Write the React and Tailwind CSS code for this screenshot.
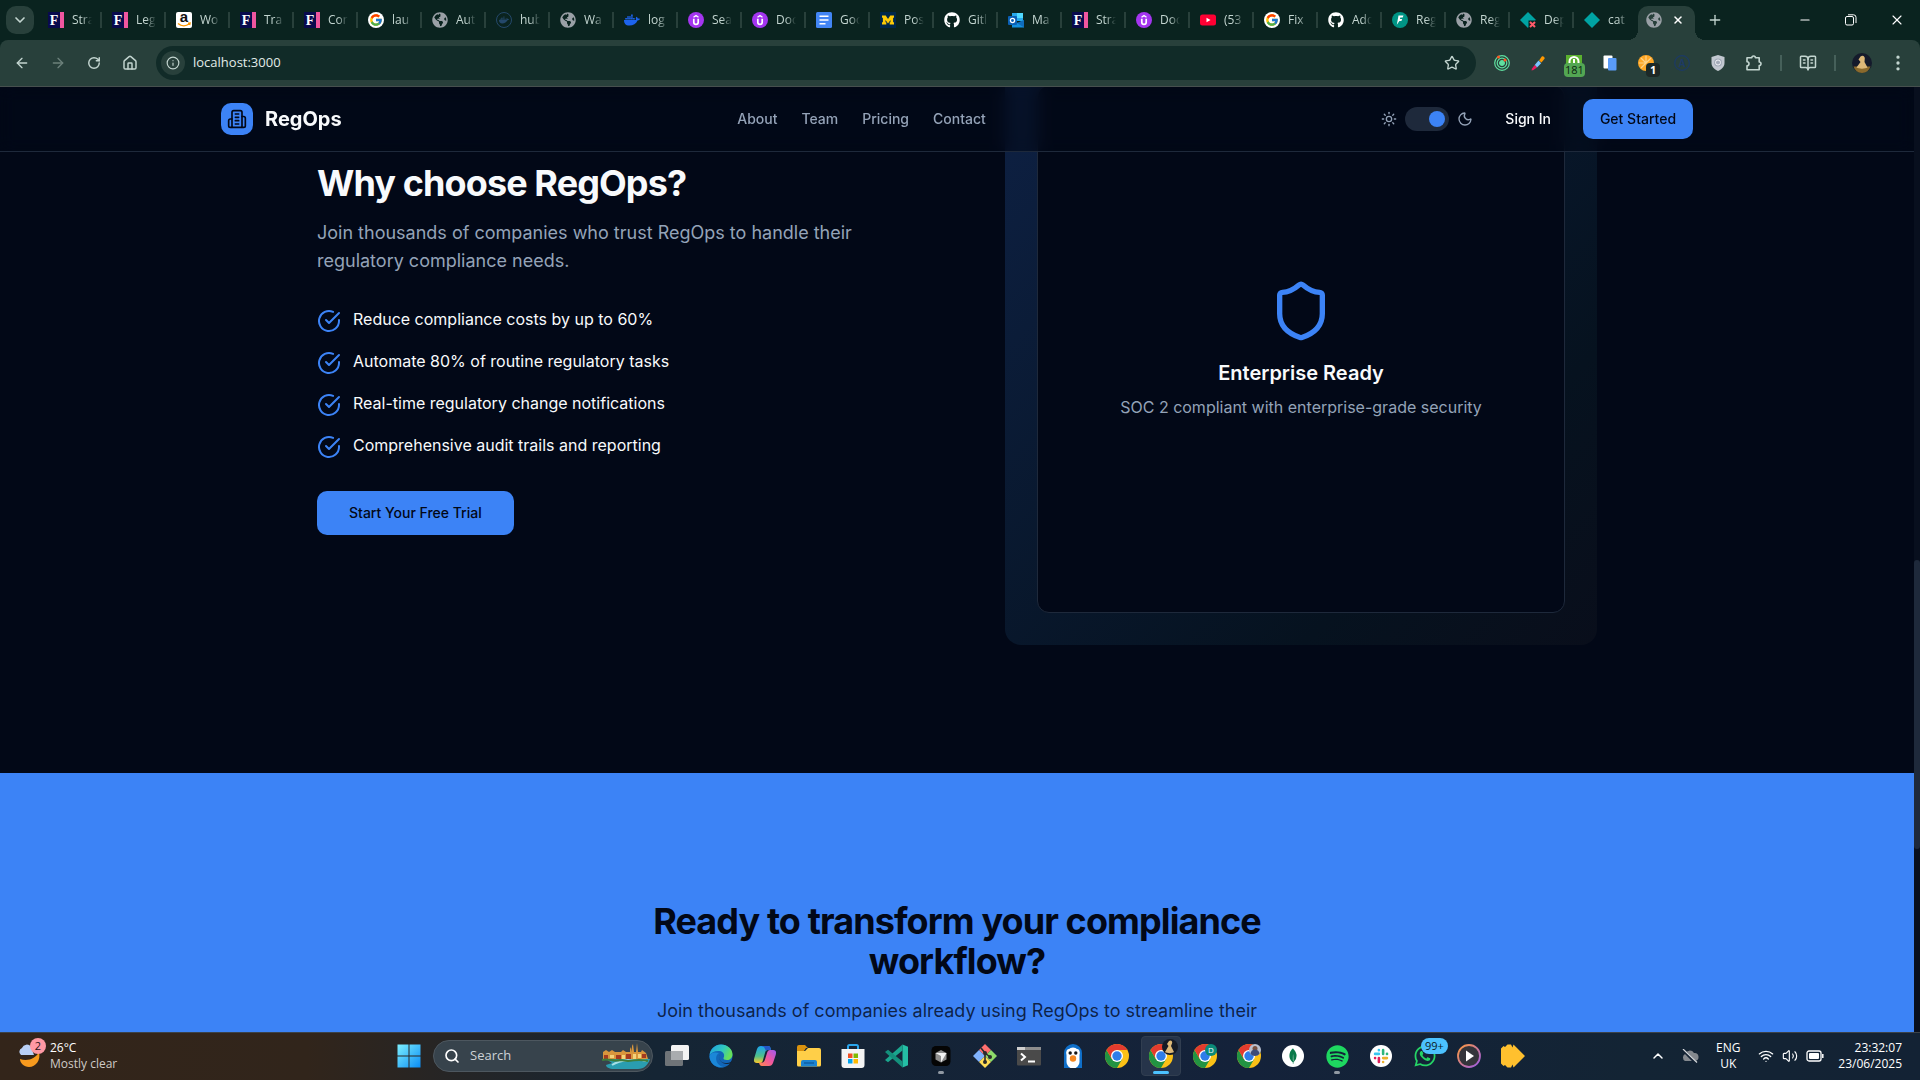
import React, { useState } from 'react';
import { FaGithub, FaDocker, FaGlobeAmericas, FaWhatsapp, FaSpotify } from 'react-icons/fa';
import { FcGoogle } from 'react-icons/fc';
import { SiMongodb } from 'react-icons/si';
import { ArrowLeft, ArrowRight, RotateCw, House, Info, Star, BookOpenText, ChevronDown, ChevronUp, X, Plus, Minus, Sun, Moon, Shield, Search, Wifi, Volume2, EllipsisVertical } from 'lucide-react';

// ---------- favicons ----------

const Globe = () => <FaGlobeAmericas className="size-4 text-[#9aa0a6]" />;

const FBadge = () => (
  <svg viewBox="0 0 16 16" className="size-4">
    <rect width="12" height="16" fill="#090a4d" />
    <rect x="12" width="4" height="16" fill="#f0569f" />
    <text x="6" y="13" textAnchor="middle" fontFamily="Liberation Serif, serif" fontWeight="700" fontSize="14" fill="#fff">F</text>
  </svg>
);

const Amazon = () => (
  <svg viewBox="0 0 16 16" className="size-4">
    <rect width="16" height="16" rx="2" fill="#fff" />
    <text x="8" y="10" textAnchor="middle" fontFamily="Liberation Sans, sans-serif" fontWeight="700" fontSize="15" fill="#111">a</text>
    <path d="M2 11.500c3.500 2.800 8 2.800 11 .5M12 11.200l2-.2-.4 2" stroke="#f90" strokeWidth="1.500" fill="none" />
  </svg>
);

const Google = () => (
  <span className="grid size-4 place-items-center rounded-full bg-white">
    <FcGoogle className="size-3.5" />
  </span>
);

const Hub = () => (
  <span className="grid size-4 place-items-center rounded-full border border-[#24486a] text-[#24486a]">
    <FaDocker className="size-2.5" />
  </span>
);

const Docker = () => <FaDocker className="size-4 text-[#1d63ed]" />;

const Udemy = () => (
  <svg viewBox="0 0 16 16" className="size-4">
    <circle cx="8" cy="8" r="8" fill="#a435f0" />
    <path d="M5.500 5.200 8 3.600l2.500 1.600" stroke="#fff" strokeWidth="1.300" fill="none" />
    <path d="M5.800 6.800v3.400a2.200 2.200 0 0 0 4.400 0V6.800" stroke="#fff" strokeWidth="1.700" fill="none" />
  </svg>
);

const Docs = () => (
  <svg viewBox="0 0 16 16" className="size-4">
    <rect width="16" height="16" rx="1.500" fill="#4285f4" />
    <path d="M3.500 4.200h9M3.500 8h9M3.500 11.800h6" stroke="#fff" strokeWidth="1.600" />
  </svg>
);

const Michigan = () => (
  <svg viewBox="0 0 16 16" className="size-4">
    <rect width="16" height="16" fill="#00274c" />
    <path d="M2 3.500h3.700L8 7l2.300-3.500H14v2.300h-.9v4.400h.9v2.300H9.700v-2.300h.8V8L8 11.500 5.500 8v2.200h.8v2.300H2v-2.300h.9V5.800H2Z" fill="#ffcb05" />
  </svg>
);

const Github = () => <FaGithub className="size-4 text-white" />;

const Outlook = () => (
  <svg viewBox="0 0 16 16" className="size-4">
    <path d="M4 1h11v8H4z" fill="#28a8ea" />
    <path d="M9 1h6v5H9z" fill="#50d9ff" />
    <path d="M4 8l6 3 6-3v7.500H4Z" fill="#1490df" />
    <path d="M16 8v7.500L9 11Z" fill="#0f6cbd" />
    <rect y="4" width="9" height="9" rx="1" fill="#0a5fb4" />
    <circle cx="4.500" cy="8.500" r="2.100" stroke="#fff" strokeWidth="1.300" fill="none" />
  </svg>
);

const Youtube = () => (
  <svg viewBox="0 0 16 16" className="size-4">
    <rect y="2.500" width="16" height="11" rx="2.500" fill="#ff0033" />
    <path d="M6.500 5.700v4.600l4-2.300Z" fill="#fff" />
  </svg>
);

const FastApi = () => (
  <svg viewBox="0 0 16 16" className="size-4">
    <circle cx="8" cy="8" r="8" fill="#009485" />
    <path d="M6.500 3.500h5l-.8 2H8.300l-.4 1.500h2.300l-.8 1.900H7.400L4.800 12.800Z" fill="#fff" />
  </svg>
);

const Diamond = ({ failed }) => (
  <svg viewBox="0 0 16 16" className="size-4">
    <path d="M8 0l8 8-8 8-8-8Z" fill="#00a3a3" />
    {failed && (
      <>
        <path d="M8.500 8.500H16V16H8.500Z" fill="#0a231f" />
        <path d="M10 10l5 5M15 10l-5 5" stroke="#ff5a6a" strokeWidth="2" />
      </>
    )}
  </svg>
);

const tabs = [
  { icon: <FBadge />, title: 'Stra' },
  { icon: <FBadge />, title: 'Leg' },
  { icon: <Amazon />, title: 'Wo' },
  { icon: <FBadge />, title: 'Tra' },
  { icon: <FBadge />, title: 'Cor' },
  { icon: <Google />, title: 'lau' },
  { icon: <Globe />, title: 'Aut' },
  { icon: <Hub />, title: 'hub' },
  { icon: <Globe />, title: 'Wa' },
  { icon: <Docker />, title: 'log' },
  { icon: <Udemy />, title: 'Sea' },
  { icon: <Udemy />, title: 'Doc' },
  { icon: <Docs />, title: 'Goo' },
  { icon: <Michigan />, title: 'Pos' },
  { icon: <Github />, title: 'Gitl' },
  { icon: <Outlook />, title: 'Ma' },
  { icon: <FBadge />, title: 'Stra' },
  { icon: <Udemy />, title: 'Doc' },
  { icon: <Youtube />, title: '(53' },
  { icon: <Google />, title: 'Fix' },
  { icon: <Github />, title: 'Add' },
  { icon: <FastApi />, title: 'Reg' },
  { icon: <Globe />, title: 'Reg' },
  { icon: <Diamond failed />, title: 'Dep' },
  { icon: <Diamond />, title: 'cat' },
];

const TabStrip = () => (
  <div className="flex h-10 items-center bg-[#0a231f] pl-1.5 text-[#c3d5d0]">
    <button aria-label="Search tabs" className="mr-1 grid size-7 shrink-0 place-items-center rounded-[10px] bg-[#28403b]">
      <ChevronDown className="size-4" strokeWidth={2.5} />
    </button>
    {tabs.map((tab, i) => (
      <button key={i} className="flex h-8 w-16 shrink-0 items-center gap-2 pl-2.5 text-xs">
        {tab.icon}
        <span className="w-5 overflow-hidden text-left whitespace-nowrap [mask-image:linear-gradient(to_right,black_50%,transparent)]">{tab.title}</span>
        {i < tabs.length - 1 && <span className="ml-auto h-4 w-0.5 bg-[#28403b]" />}
      </button>
    ))}
    <div className="relative flex h-[34px] w-[57px] shrink-0 items-center gap-2 self-end rounded-t-[10px] bg-[#28403b] pb-1.5 pl-2 before:absolute before:bottom-0 before:-left-2.5 before:size-2.5 before:bg-[radial-gradient(circle_at_0_0,transparent_10px,#28403b_10px)] after:absolute after:-right-2.5 after:bottom-0 after:size-2.5 after:bg-[radial-gradient(circle_at_100%_0,transparent_10px,#28403b_10px)]">
      <Globe />
      <button aria-label="Close tab" className="grid size-4 place-items-center text-white">
        <X className="size-3" strokeWidth={3} />
      </button>
    </div>
    <button aria-label="New tab" className="ml-3 grid size-4 place-items-center">
      <Plus className="size-4" />
    </button>
    <div className="ml-auto flex text-white">
      <button aria-label="Minimize" className="grid h-10 w-[46px] place-items-center">
        <Minus className="size-3.5" strokeWidth={2} />
      </button>
      <button aria-label="Restore" className="grid h-10 w-[46px] place-items-center">
        <svg viewBox="0 0 12 12" className="size-3" fill="none" stroke="currentColor">
          <rect x=".5" y="2.500" width="8" height="8.500" rx="1.500" />
          <path d="M3 .8h5.500a2.500 2.500 0 0 1 2.500 2.500V9" />
        </svg>
      </button>
      <button aria-label="Close" className="grid h-10 w-[46px] place-items-center">
        <X className="size-4" strokeWidth={1.7} />
      </button>
    </div>
  </div>
);

const Knight = ({ className }) => (
  <svg viewBox="0 0 20 20" className={className}>
    <circle cx="10" cy="10" r="10" fill="#141a2b" />
    <path d="M1.500 13.500h17A9.500 9.500 0 0 1 10 20a9.500 9.500 0 0 1-8.500-6.500Z" fill="#8a6a2c" />
    <path d="M8.500 3.500c2.500-2 5 .3 4.200 3L12.500 9l3 5.500c-2.500 1.500-8.500 1.500-11 0L8.500 9 6.500 6.500Z" fill="#dcb878" />
  </svg>
);

const extensions = [
  <svg key="orbit" viewBox="0 0 16 16" className="size-4" fill="none" stroke="#5fe0a0">
    <circle cx="8" cy="8" r="7.300" strokeWidth="1.200" />
    <circle cx="8" cy="8" r="4.800" strokeWidth="1.200" />
    <circle cx="8" cy="8" r="2.500" fill="#5fe0a0" />
    <circle cx="4.500" cy="2" r="1.500" fill="#ff5722" stroke="none" />
    <circle cx="11" cy="5" r="1.500" fill="#ff5722" stroke="none" />
  </svg>,
  <svg key="picker" viewBox="0 0 16 16" className="size-4">
    <path d="M9 5.500l2.800-3.900c1-1.200 3.700.9 2.700 2.200L11.500 7.500Z" fill="#ff9800" />
    <path d="M8.500 5.500l2.700 2.700L7 12.500 4.700 10Z" fill="#7cc4ff" />
    <path d="M4.700 10l2.300 2.500L3.500 15l-2 .5.500-2Z" fill="#e91e63" />
  </svg>,
  <span key="ad" className="relative block size-4">
    <svg viewBox="0 0 16 16" className="size-4">
      <rect width="16" height="16" fill="#5bb12f" />
      <path d="M3.500 9V6.500a4.500 4.500 0 0 1 9 0V9M8 4v6" stroke="#fff" strokeWidth="2" fill="none" />
    </svg>
    <span className="absolute top-2 -left-0.5 rounded-sm bg-[#53a653] px-px text-[11px] leading-[14px] text-[#0c2410]">181</span>
  </span>,
  <svg key="pages" viewBox="0 0 16 16" className="size-4">
    <rect x="1.500" y=".5" width="9" height="13" rx="1" fill="#fff" />
    <rect x="6" y="3" width="8.500" height="12.500" rx="1" fill="#5a9cf8" />
  </svg>,
  <span key="cookie" className="relative block size-4">
    <svg viewBox="0 0 16 16" className="size-4">
      <circle cx="8" cy="8" r="8" fill="#ffa726" />
      <path d="M8 8L3 3M8 8V1M8 8l5-5M8 8H1M8 8l-5 5" stroke="#ffd38a" strokeWidth="1.200" />
    </svg>
    <span className="absolute top-2 left-2 rounded-sm bg-[#1d2826] px-1 text-[11px] leading-[14px] font-bold text-white">1</span>
  </span>,
  <svg key="letter" viewBox="0 0 16 16" className="size-4">
    <circle cx="8" cy="8" r="7.300" fill="none" stroke="#1c3a66" strokeWidth="1.200" />
    <text x="8" y="11.500" textAnchor="middle" fontFamily="Liberation Sans, sans-serif" fontWeight="700" fontSize="10" fill="#1c3a66">A</text>
  </svg>,
  <svg key="guard" viewBox="0 0 16 16" className="size-4">
    <path d="M8 0l6.500 2v6c0 4-3.500 6.700-6.500 8-3-1.300-6.500-4-6.500-8V2Z" fill="#c2c8d0" />
    <circle cx="8" cy="7.500" r="4" fill="#a3abb8" />
    <circle cx="8" cy="7.500" r="2.500" fill="none" stroke="#eef0f4" />
  </svg>,
  <svg key="puzzle" viewBox="0 0 16 16" className="size-4 text-[#c3d5d0]" fill="none" stroke="currentColor" strokeWidth="1.600">
    <path d="M1 2.800h4.800a1.800 1.800 0 0 1 3.600 0h3.800v4.200a1.800 1.800 0 0 1 0 3.600v4.200H1v-4a2 2 0 0 0 0-4Z" strokeLinejoin="round" />
  </svg>,
];

const Toolbar = () => (
  <div className="bg-[#0a231f]">
    <div className="flex h-[47px] items-center rounded-t-lg border-b border-[#46504e] bg-[#28403b] pl-1 text-[#c3d5d0]">
      <button aria-label="Back" className="grid size-9 place-items-center"><ArrowLeft className="size-4" /></button>
      <button aria-label="Forward" className="grid size-9 place-items-center text-[#6c817b]"><ArrowRight className="size-4" /></button>
      <button aria-label="Reload" className="grid size-9 place-items-center"><RotateCw className="size-3.5" strokeWidth={2.5} /></button>
      <button aria-label="Home" className="grid size-9 place-items-center"><House className="size-4" strokeWidth={2.2} /></button>
      <div className="mr-2 ml-2 flex h-[34px] flex-1 items-center gap-2 rounded-full bg-[#112b28] pr-4 pl-[5px]">
        <button aria-label="Site information" className="grid size-6 place-items-center rounded-full bg-[#28403b]">
          <Info className="size-3.5" />
        </button>
        <input aria-label="Address" defaultValue="localhost:3000" className="min-w-0 flex-1 bg-transparent text-[13px] text-[#e2ebe8] outline-none" />
        <button aria-label="Bookmark this page"><Star className="size-4" /></button>
      </div>
      {extensions.map((icon, i) => (
        <button key={i} aria-label={`Extension ${i + 1}`} className="grid size-9 place-items-center">{icon}</button>
      ))}
      <span className="mx-2 h-4 w-0.5 bg-[#46605a]" />
      <button aria-label="Reading list" className="grid size-9 place-items-center"><BookOpenText className="size-[18px]" /></button>
      <span className="mx-2 h-4 w-0.5 bg-[#46605a]" />
      <button aria-label="Profile" className="grid size-9 place-items-center"><Knight className="size-5" /></button>
      <button aria-label="Menu" className="mr-1 grid size-9 place-items-center"><EllipsisVertical className="size-5" /></button>
    </div>
  </div>
);

// ---------- landing page ----------

const BuildingIcon = () => (
  <svg viewBox="0 0 24 24" className="size-5 text-[#020817]" fill="none" stroke="currentColor" strokeWidth="2" strokeLinecap="round" strokeLinejoin="round">
    <path d="M6 22V4a2 2 0 0 1 2-2h8a2 2 0 0 1 2 2v18Z" />
    <path d="M6 12H4a2 2 0 0 0-2 2v6a2 2 0 0 0 2 2h2" />
    <path d="M18 9h2a2 2 0 0 1 2 2v9a2 2 0 0 1-2 2h-2" />
    <path d="M10 6h4M10 10h4M10 14h4M10 18h4" />
  </svg>
);

const CheckIcon = () => (
  <svg viewBox="0 0 24 24" className="mt-0.5 size-6 shrink-0 text-[#3c83f6]" fill="none" stroke="currentColor" strokeWidth="2" strokeLinecap="round" strokeLinejoin="round">
    <path d="M22 11.080V12a10 10 0 1 1-5.930-9.140" />
    <path d="m9 11 3 3L22 4" />
  </svg>
);

const SiteHeader = () => {
  const [dark, setDark] = useState(true);

  return (
    <header className="absolute inset-x-0 top-0 z-10 border-b border-[#1e293b] bg-[#020817]/60 backdrop-blur-sm">
      <div className="mx-auto flex h-16 max-w-screen-2xl items-center justify-between px-8">
        <a href="#" className="flex items-center gap-3">
          <span className="grid size-8 place-items-center rounded-[10px] bg-[#3c83f6]"><BuildingIcon /></span>
          <span className="text-xl font-bold">RegOps</span>
        </a>
        <nav className="flex gap-6 text-sm font-medium text-[#94a3b8]">
          <a href="#about">About</a>
          <a href="#team">Team</a>
          <a href="#pricing">Pricing</a>
          <a href="#contact">Contact</a>
        </nav>
        <div className="flex items-center gap-4">
          <label className="flex items-center gap-2 text-[#94a3b8]">
            <Sun className="size-4" />
            <input
              type="checkbox"
              role="switch"
              aria-label="Dark mode"
              checked={dark}
              onChange={() => setDark(!dark)}
              className="flex h-6 w-11 appearance-none rounded-full bg-[#1e293b] p-1 before:size-4 before:rounded-full before:bg-[#3c83f6] checked:justify-end"
            />
            <Moon className="size-4" />
          </label>
          <button className="h-10 px-4 text-sm font-medium">Sign In</button>
          <button className="h-10 w-[110px] rounded-[10px] bg-[#3c83f6] text-sm font-medium text-[#020817]">Get Started</button>
        </div>
      </div>
    </header>
  );
};

const benefits = [
  'Reduce compliance costs by up to 60%',
  'Automate 80% of routine regulatory tasks',
  'Real-time regulatory change notifications',
  'Comprehensive audit trails and reporting',
];

const WhySection = () => (
  <section className="-mt-[162px] py-32">
    <div className="mx-auto grid max-w-7xl grid-cols-2 items-center gap-24">
      <div>
        <h2 className="text-4xl font-bold tracking-tight">Why choose RegOps?</h2>
        <p className="mt-4 text-lg leading-7 text-[#94a3b8]">
          Join thousands of companies who trust RegOps to handle their regulatory compliance needs.
        </p>
        <ul className="mt-8 space-y-4">
          {benefits.map(text => (
            <li key={text} className="flex items-start gap-3">
              <CheckIcon />
              <span>{text}</span>
            </li>
          ))}
        </ul>
        <button className="mt-8 h-11 rounded-[10px] bg-[#3c83f6] px-8 text-sm font-medium text-[#020817]">Start Your Free Trial</button>
      </div>
      <div className="aspect-square rounded-2xl bg-linear-to-br from-[#0e2145] via-[#06121f] via-75% to-[#090e1b] p-8">
        <div className="flex h-full flex-col items-center justify-center rounded-xl border border-[#1e293b] bg-[#020817]">
          <Shield className="mb-4 size-16 text-[#3c83f6]" />
          <h3 className="mb-2 text-xl font-semibold">Enterprise Ready</h3>
          <p className="text-[#94a3b8]">SOC 2 compliant with enterprise-grade security</p>
        </div>
      </div>
    </div>
  </section>
);

const CallToAction = () => (
  <section className="bg-[#3c83f6] py-32 text-center text-[#020817]">
    <div className="mx-auto max-w-2xl">
      <h2 className="text-4xl font-bold tracking-tight">Ready to transform your compliance workflow?</h2>
      <p className="mt-4 text-lg leading-7 text-[#020817]/80">Join thousands of companies already using RegOps to streamline their</p>
    </div>
  </section>
);

// ---------- taskbar ----------

const StartIcon = () => (
  <svg viewBox="0 0 24 24" className="size-6">
    <defs>
      <linearGradient id="win" x1="0" y1="0" x2="1" y2="1">
        <stop offset="0" stopColor="#7df0ff" />
        <stop offset="1" stopColor="#0a8cf5" />
      </linearGradient>
    </defs>
    <path d="M.5.5h11v11H.5zM12.500.5h11v11h-11zM.5 12.500h11v11H.5zM12.500 12.500h11v11h-11z" fill="url(#win)" />
  </svg>
);

const TaskView = () => (
  <svg viewBox="0 0 24 24" className="size-6">
    <rect x="6" y="1" width="18" height="15" rx="1.500" fill="#f3f3f3" />
    <rect y="7" width="18" height="15" rx="1.500" fill="#6f7478" />
    <path d="M6 7h12v9H6z" fill="#a9acaf" />
  </svg>
);

const EdgeIcon = () => (
  <svg viewBox="0 0 24 24" className="size-6">
    <defs>
      <linearGradient id="edge1" x1="0" y1="0" x2="1" y2=".4">
        <stop offset="0" stopColor="#1f9de0" />
        <stop offset=".6" stopColor="#2fc8c0" />
        <stop offset="1" stopColor="#66e05a" />
      </linearGradient>
    </defs>
    <circle cx="12" cy="12" r="11.500" fill="#1266b8" />
    <path d="M.6 11C1.400 4.800 6.200.5 12 .5 18.500.5 23.500 5 23.500 10.500c0 3.500-2.600 5.500-5.500 5.500-2.500 0-4-1-3.500-2 1.500-2.500.5-6.500-4-7C6 6.500 2 8.500.6 11Z" fill="url(#edge1)" />
    <path d="M10 9c-5 3-3.500 12 4.500 14C9 24.500.8 20.500.5 12.500.5 9 6 7.500 10 9Z" fill="#1b87d8" />
    <path d="M11 10.500c-2 3.500.5 8.500 5.500 8.500 2.500 0 4.500-.7 5.800-1.600.4-.2.700.2.500.5l-1 1.400c-7 3-13.800-3.300-10.800-8.800Z" fill="#152436" />
  </svg>
);

const CopilotIcon = () => (
  <svg viewBox="0 0 24 24" className="size-6">
    <defs>
      <linearGradient id="cop1" x1="0" y1="0" x2="0" y2="1">
        <stop offset="0" stopColor="#1aa3f0" />
        <stop offset=".6" stopColor="#4fc08a" />
        <stop offset="1" stopColor="#ffc928" />
      </linearGradient>
      <linearGradient id="cop2" x1="1" y1="0" x2="0" y2="1">
        <stop offset="0" stopColor="#a05af0" />
        <stop offset=".5" stopColor="#f0569f" />
        <stop offset="1" stopColor="#ff8a4c" />
      </linearGradient>
    </defs>
    <path d="M8 2h7c2 0 2.500 1.500 3 4h-3c-2 0-2.500 1-3 3l-2 7c-.5 2-1 3-3 3H4c-3 0-3.500-2-2.700-5L4 5c.8-2 2-3 4-3Z" fill="url(#cop1)" />
    <path d="M16 22H9c-2 0-2.500-1.500-3-3.500h3c2 0 2.500-1.500 3-3l2-6.500c.6-2 1.500-3 3-3h3c3 0 3.500 2 2.700 5L20 19c-.8 2-2 3-4 3Z" fill="url(#cop2)" />
    <path d="M8 2h7c2 0 2.500 1.500 3 4h-3c-1 0-1.500.3-2 1L11 3Z" fill="#2458c8" />
  </svg>
);

const FolderIcon = () => (
  <svg viewBox="0 0 24 24" className="size-6">
    <path d="M0 3a2 2 0 0 1 2-2h6l3 3h-2L7 7H0Z" fill="#d9920e" />
    <path d="M0 7h8l3-3h11a2 2 0 0 1 2 2v15a1.500 1.500 0 0 1-1.500 1.500h-21A1.500 1.500 0 0 1 0 21Z" fill="#ffcf48" />
    <path d="M4 22.500V18a2 2 0 0 1 2-2h12a2 2 0 0 1 2 2v4.500Z" fill="#1c83d0" />
    <path d="M7 19h10" stroke="#0e5ea3" strokeWidth="1.500" />
  </svg>
);

const StoreIcon = () => (
  <svg viewBox="0 0 24 24" className="size-6">
    <path d="M7 6V2.500A1.500 1.500 0 0 1 8.500 1h7A1.500 1.500 0 0 1 17 2.500V6" stroke="#2aa5ec" strokeWidth="2" fill="none" />
    <path d="M.5 5h23v16a3 3 0 0 1-3 3h-17a3 3 0 0 1-3-3Z" fill="#f4f4f4" />
    <path d="M7 9.500h4.500V14H7z" fill="#f25022" />
    <path d="M12.500 9.500H17V14h-4.500z" fill="#7fba00" />
    <path d="M7 15h4.500v4.500H7z" fill="#00a4ef" />
    <path d="M12.500 15H17v4.500h-4.500z" fill="#ffb900" />
  </svg>
);

const CodeIcon = () => (
  <svg viewBox="0 0 24 24" className="size-6">
    <path d="M17.500.5 23 2.800v18.400l-5.500 2.300Z" fill="#24bfa5" />
    <path d="M17.500.5v6L3 18.200 0 16Z" fill="#1aa68e" />
    <path d="M17.500 23.500v-6L3 5.800 0 8Z" fill="#14907c" />
  </svg>
);

const CubeIcon = () => (
  <svg viewBox="0 0 24 24" className="size-6">
    <rect x="2.500" y="2" width="19" height="20" rx="4.500" fill="#050505" />
    <path d="M12 6l5.500 3v6.500L12 18.500 6.500 15.500V9Z" fill="#8d8d8d" />
    <path d="M6.500 9h11L12 18.500V12Z" fill="#f1f1f1" />
  </svg>
);

const GitIcon = () => (
  <svg viewBox="0 0 24 24" className="size-6">
    <path d="M12 0l6 6-6 6-6-6Z" fill="#ff6f6f" />
    <path d="M6 6l6 6-6 6-6-6Z" fill="#80b3ff" />
    <path d="M18 6l6 6-6 6-6-6Z" fill="#8ddb6a" />
    <path d="M12 12l6 6-6 6-6-6Z" fill="#ffdd55" />
    <path d="M8 4l4 5v9M12 9l5 4" stroke="#2b2b2b" strokeWidth="1.600" fill="none" />
    <circle cx="12" cy="9" r="2" fill="#2b2b2b" />
    <circle cx="12" cy="18" r="2" fill="#2b2b2b" />
    <circle cx="17" cy="13" r="2" fill="#2b2b2b" />
  </svg>
);

const TerminalIcon = () => (
  <svg viewBox="0 0 24 24" className="size-6">
    <rect y="3" width="24" height="18.500" rx="1" fill="#4a4a4a" />
    <path d="M0 3h24v3H0z" fill="#8d8d8d" />
    <path d="M0 3h8v3H0z" fill="#cfcfcf" />
    <path d="M4 9.500l4 3.500-4 3.500M11 17.500h7" stroke="#fff" strokeWidth="2" fill="none" />
  </svg>
);

const PenguinIcon = () => (
  <svg viewBox="0 0 24 24" className="size-6">
    <path d="M3 24V9a9 9 0 0 1 18 0v15Z" fill="#0f6fc9" />
    <path d="M5.500 10a6.500 6.500 0 0 1 13 0v8a6.500 6.500 0 0 1-13 0Z" fill="#fff" />
    <circle cx="8.700" cy="8.500" r="3.400" fill="#fff" />
    <circle cx="15.300" cy="8.500" r="3.400" fill="#fff" />
    <circle cx="9.200" cy="9" r="1.700" fill="#171717" />
    <circle cx="14.800" cy="9" r="1.700" fill="#171717" />
    <circle cx="12" cy="14.500" r="3.200" fill="#f5871f" />
  </svg>
);

const ChromeIcon = ({ children }) => (
  <svg viewBox="0 0 24 24" className="size-6 overflow-visible">
    <circle cx="12" cy="12" r="12" fill="#fbc116" />
    <path d="M1.600 6A12 12 0 0 0 12 24l5.200-9H6.800Z" fill="#229342" />
    <path d="M1.600 6A12 12 0 0 1 22.400 6H12L6.800 15Z" fill="#e33b2e" />
    <circle cx="12" cy="12" r="6" fill="#fff" />
    <circle cx="12" cy="12" r="4.700" fill="#2f7de9" />
    {children}
  </svg>
);

const ChromeKnight = () => (
  <ChromeIcon>
    <circle cx="21" cy="3" r="8" fill="#141a26" />
    <path d="M20-3c2-1.500 4 .5 3 2.500L22 2l3 6c-2 1.500-7 1.500-9 0l3.500-6-1.500-2Z" fill="#dcb878" />
  </ChromeIcon>
);

const ChromeLetter = () => (
  <ChromeIcon>
    <circle cx="18" cy="6" r="6" fill="#0b8a78" />
    <text x="18" y="9" textAnchor="middle" fontSize="8" fontFamily="Open Sans, sans-serif" fill="#fff">D</text>
  </ChromeIcon>
);

const ChromePhoto = () => (
  <ChromeIcon>
    <circle cx="18" cy="6" r="6" fill="#b9c0cf" />
    <circle cx="18" cy="4.500" r="2.500" fill="#7a5140" />
    <path d="M13.500 10a4.500 4.500 0 0 1 9 0 6 6 0 0 1-9 0Z" fill="#3d4b78" />
  </ChromeIcon>
);

const MongoIcon = () => (
  <span className="grid size-[22px] place-items-center rounded-full bg-white">
    <SiMongodb className="size-4 text-[#0a7a4a]" />
  </span>
);

const SlackIcon = () => (
  <svg viewBox="0 0 24 24" className="size-[22px]">
    <circle cx="12" cy="12" r="12" fill="#fff" />
    <g strokeWidth="2.800" strokeLinecap="round">
      <path d="M5.500 9.700h4.200M9.700 5.500v.2" stroke="#36c5f0" />
      <path d="M14.300 5.500v4.200M18.500 9.700h.1" stroke="#2eb67d" />
      <path d="M14.300 14.300h4.200M14.300 18.500v.1" stroke="#ecb22e" />
      <path d="M9.700 14.300v4.200M5.500 14.300h.1" stroke="#e01e5a" />
    </g>
  </svg>
);

const WhatsappIcon = () => (
  <span className="relative">
    <FaWhatsapp className="size-6 text-[#25d366]" />
    <span className="absolute -top-1.5 left-2 rounded-lg bg-[#4cc2ff] px-1 text-[11px] leading-4 text-[#0b1a26]">99+</span>
  </span>
);

const MediaIcon = () => (
  <svg viewBox="0 0 24 24" className="size-6">
    <defs>
      <linearGradient id="media" x1="0" y1="0" x2="1" y2="1">
        <stop offset="0" stopColor="#ff9a3c" />
        <stop offset="1" stopColor="#9a5ae8" />
      </linearGradient>
    </defs>
    <circle cx="12" cy="12" r="11" fill="#34343a" stroke="url(#media)" strokeWidth="1.800" />
    <path d="M9 6.500v11l8-5.500Z" fill="#fff" />
  </svg>
);

const ArrowsIcon = () => (
  <svg viewBox="0 0 24 24" className="size-6">
    <path d="M0 4.500 2.500 2 4 3l2.500-2.500H10l1.500 3L12.500.5 24 12 12.500 23.500l-1-3-1.500 3H6.500L4 21l-1.500 1L0 19.500Z" fill="#ffc02e" />
  </svg>
);

const apps = [
  { name: 'Task view', icon: <TaskView /> },
  { name: 'Edge', icon: <EdgeIcon /> },
  { name: 'Copilot', icon: <CopilotIcon /> },
  { name: 'File Explorer', icon: <FolderIcon /> },
  { name: 'Store', icon: <StoreIcon /> },
  { name: 'Code', icon: <CodeIcon /> },
  { name: 'Cursor', icon: <CubeIcon />, running: true },
  { name: 'Git', icon: <GitIcon /> },
  { name: 'Terminal', icon: <TerminalIcon /> },
  { name: 'Penguin', icon: <PenguinIcon /> },
  { name: 'Chrome', icon: <ChromeIcon /> },
  { name: 'Chrome profile 1', icon: <ChromeKnight />, active: true },
  { name: 'Chrome profile 2', icon: <ChromeLetter /> },
  { name: 'Chrome profile 3', icon: <ChromePhoto /> },
  { name: 'MongoDB', icon: <MongoIcon /> },
  { name: 'Spotify', icon: <FaSpotify className="size-[23px] text-[#1ed760]" />, running: true },
  { name: 'Slack', icon: <SlackIcon /> },
  { name: 'WhatsApp', icon: <WhatsappIcon /> },
  { name: 'Media player', icon: <MediaIcon /> },
  { name: 'Arrows', icon: <ArrowsIcon /> },
];

const Weather = () => (
  <button className="flex items-center gap-2 pl-[18px] text-left text-xs leading-4">
    <span className="relative">
      <svg viewBox="0 0 24 28" className="h-7 w-6">
        <path d="M21 10c2 8-3 15-10 15-5 0-9-4-9-8 8 3 16-1 19-7Z" fill="#f79a1e" />
        <path d="M3 13a4 4 0 0 1 1-7 5 5 0 0 1 9-1l3 8Z" fill="#b9d0f5" />
      </svg>
      <span className="absolute -top-1 left-3 grid size-4 place-items-center rounded-full bg-[#ff99a4] text-[11px] text-[#2a1216]">2</span>
    </span>
    <span>
      <span className="block text-white">26°C</span>
      <span className="block text-[#cfcac6]">Mostly clear</span>
    </span>
  </button>
);

const Taskbar = () => (
  <footer className="relative flex h-12 items-center bg-[linear-gradient(to_right,#33251a_0%,#31251b_16%,#152534_34%,#14223a_65%,#132434_85%,#132234_100%)] text-white shadow-[inset_0_1px_#3c4248]">
    <Weather />
    <div className="absolute left-[387px] flex items-center">
      <button aria-label="Start" className="grid h-10 w-11 place-items-center"><StartIcon /></button>
      <label className="ml-0.5 flex h-8 w-[220px] items-center gap-2.5 rounded-full border border-[#4d575f] bg-[#37434c] pr-0.5 pl-2.5">
        <Search className="size-4 shrink-0" strokeWidth={2.5} />
        <input aria-label="Search" placeholder="Search" className="w-full min-w-0 bg-transparent text-[13px] outline-none placeholder:text-[#cdd2d6]" />
        <svg viewBox="0 0 48 26" className="h-[26px] w-12 shrink-0">
          <path d="M4 16l20-2 24 2c-2 6-6 10-12 10H12c-5 0-8-2-8-4l6-2Z" fill="#2a9db0" />
          <path d="M10 22c8-5 24-7 34-4" stroke="#a5dfe6" strokeWidth="2" fill="none" />
          <path d="M1 16V9l3-2 3 2 3-2 3 2h6l2-2 3 2h4V6l1-2 1 5V3l1-2 1 8h2l1-9 1 9h3l1-2 4 3 2 6Z" fill="#d9963c" />
          <path d="M2 12h4v4H2zM14 12h5v4h-5zM24 11h5v5h-5zM40 11h4v4h-4z" fill="#a33a20" />
          <path d="M8 12h4v3H8zM20 12h3v4h-3zM31 11h3v5h-3zM36 11h3v4h-3z" fill="#f4d27a" />
          <path d="M0 17c6-2 12 2 18 0l8 1c6-1 12-2 20 0" stroke="#3f7d3a" strokeWidth="2" fill="none" />
        </svg>
      </label>
      <div className="ml-0.5 flex">
        {apps.map(app => (
          <button key={app.name} aria-label={app.name} className="relative grid h-10 w-11 place-items-center">
            {app.active && <span className="absolute inset-x-0.5 inset-y-0 rounded-sm border border-[#313e50] bg-[#26344a]" />}
            <span className="relative grid place-items-center">{app.icon}</span>
            {app.active && <span className="absolute bottom-0.5 h-[3px] w-4 rounded-full bg-[#4cc2ff]" />}
            {app.running && <span className="absolute bottom-0.5 h-[3px] w-1.5 rounded-full bg-[#9199a3]" />}
          </button>
        ))}
      </div>
    </div>
    <div className="ml-auto flex items-center pr-[18px] text-xs leading-4">
      <button aria-label="Hidden icons" className="grid w-8 place-items-center"><ChevronUp className="size-4" strokeWidth={2.2} /></button>
      <button aria-label="Cloud storage" className="grid w-8 place-items-center">
        <svg viewBox="0 0 18 14" className="h-3.5 w-[18px]">
          <path d="M4 12a4 4 0 0 1 0-7 5 5 0 0 1 9-1 4 4 0 0 1 1 8Z" fill="#84898f" />
          <path d="M2 1l13 13" stroke="#132234" strokeWidth="3" />
          <path d="M2 0l14 13.500" stroke="#d7dadd" strokeWidth="1.200" />
        </svg>
      </button>
      <button className="w-11 text-center">ENG<br />UK</button>
      <button aria-label="Network, volume, battery" className="ml-2 flex items-center gap-2">
        <Wifi className="size-4" />
        <Volume2 className="size-4" strokeWidth={1.7} />
        <svg viewBox="0 0 18 12" className="h-3 w-[18px]">
          <rect x="1" y="1" width="14" height="10" rx="2" fill="none" stroke="#fff" strokeWidth="1.300" />
          <rect x="3" y="3" width="10" height="6" rx="1" fill="#fff" />
          <path d="M16.800 4v4" stroke="#fff" strokeWidth="1.500" />
        </svg>
      </button>
      <button className="ml-3.5 text-right">23:32:07<br />23/06/2025</button>
    </div>
  </footer>
);

const App = () => {
  return (
    <div className="flex h-screen flex-col overflow-hidden bg-[#020817] font-['Open_Sans',sans-serif]">
      <TabStrip />
      <Toolbar />
      <div className="flex min-h-0 flex-1 font-['Inter',sans-serif] text-[#f8fafc]">
        <main className="relative flow-root min-w-0 flex-1 overflow-hidden">
          <SiteHeader />
          <WhySection />
          <CallToAction />
        </main>
        <div className="w-1.5 bg-[#080f1e] pt-[473px]">
          <div className="h-[289px] rounded-full bg-[#1e293b]" />
        </div>
      </div>
      <Taskbar />
    </div>
  );
};

export default App;
